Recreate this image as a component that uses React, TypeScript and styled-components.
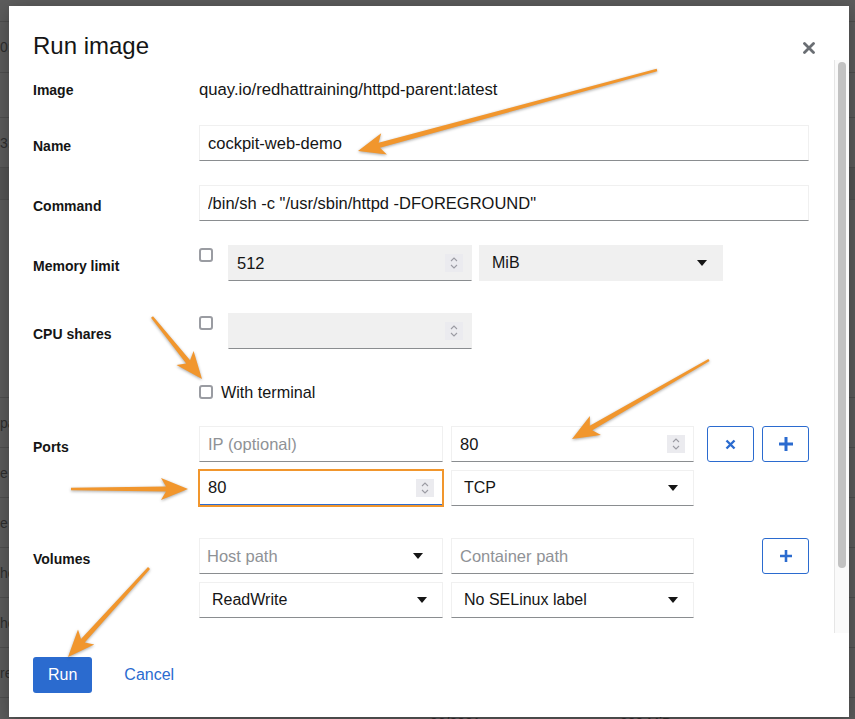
import React from 'react';
import styled, { createGlobalStyle, css } from 'styled-components';

const FONT = `"Liberation Sans", Arial, sans-serif`;
const BLUE = '#2b6bcf';
const ORANGE = '#f1962d';

const GlobalStyle = createGlobalStyle`
  html, body { margin: 0; padding: 0; }
  body { font-family: ${FONT}; color: #151515; background: #5c5c5c; }
  * { box-sizing: border-box; }
`;

const Page = styled.div`
  position: relative;
  width: 855px;
  height: 719px;
  overflow: hidden;
  background: #5c5c5c;
`;

/* ---------- background table behind the backdrop ---------- */
const BgTable = styled.div`
  display: flex;
  flex-direction: column;
`;

const BgRow = styled.div<{ $h: number; $dark?: boolean }>`
  flex: none;
  height: ${(p) => p.$h}px;
  display: grid;
  grid-template-columns: 430px 190px 1fr;
  align-items: center;
  border-bottom: 1px solid #4e4e4e;
  background: ${(p) => (p.$dark ? '#545454' : 'transparent')};
  font-size: 14px;
  color: #2e2e2e;
`;

const BgCell = styled.span`
  white-space: nowrap;
  overflow: hidden;
`;

/* ---------- modal ---------- */
const Modal = styled.div`
  position: absolute;
  left: 9px;
  top: 6px;
  width: 840px;
  height: 711px;
  background: #fff;
  display: flex;
  flex-direction: column;
  box-shadow: 0 4px 16px rgba(0, 0, 0, 0.3);
`;

const Header = styled.div`
  flex: none;
  height: 54px;
  padding: 26px 34px 0 24px;
  display: flex;
  justify-content: space-between;
  align-items: flex-start;
`;

const Title = styled.h1`
  margin: 0;
  font-family: ${FONT};
  font-size: 24px;
  font-weight: 400;
  line-height: 28px;
  color: #151515;
`;

const CloseButton = styled.button`
  margin-top: 10px;
  width: 12px;
  height: 12px;
  padding: 0;
  border: 0;
  background: none;
  display: flex;
  cursor: pointer;
`;

const Body = styled.div`
  flex: 1;
  min-height: 0;
  display: flex;
  overflow: hidden;
`;

const FormArea = styled.div`
  flex: 1;
  min-width: 0;
  padding: 18px 25px 0 24px;
  overflow: hidden;
`;

const ScrollTrack = styled.div`
  flex: none;
  width: 15px;
  padding: 2px 3px 0 3px;
  background: #fafafa;
  border-left: 1px solid #e6e6e6;
`;

const ScrollThumb = styled.div`
  height: 506px;
  border-radius: 4px;
  background: #c2c2c2;
`;

const FormRow = styled.div<{ $mt?: number }>`
  display: grid;
  grid-template-columns: 166px 1fr;
  margin-top: ${(p) => p.$mt ?? 0}px;
`;

const Label = styled.div<{ $pt?: number }>`
  font-size: 14px;
  font-weight: 700;
  line-height: 22px;
  padding-top: ${(p) => p.$pt ?? 10}px;
  color: #151515;
`;

const Value = styled.div`
  font-size: 16.7px;
  line-height: 24px;
  color: #151515;
`;

const Grid = styled.div`
  display: grid;
  grid-template-columns: 244px 243px 1fr;
  gap: 8px;
`;

const ButtonCell = styled.div`
  display: flex;
  justify-content: flex-end;
  gap: 8px;
`;

const InlineRow = styled.div<{ $gap: number }>`
  display: flex;
  align-items: flex-start;
  gap: ${(p) => p.$gap}px;
`;

type Variant = 'plain' | 'disabled' | 'focused';

const Field = styled.div<{ $variant?: Variant; $width?: number; $annotated?: boolean }>`
  height: 36px;
  ${(p) => (p.$width ? `width: ${p.$width}px; flex: none;` : '')}
  display: flex;
  align-items: center;
  padding: 0 8px;
  border: 1px solid #f0f0f0;
  border-bottom-color: #8a8d90;
  background: #fff;
  ${(p) =>
    p.$variant === 'disabled' &&
    css`
      background: #f0f0f0;
      border-color: #f0f0f0;
      border-bottom-color: #8a8d90;
    `}
  ${(p) =>
    p.$variant === 'focused' &&
    css`
      border-bottom: 2px solid ${BLUE};
    `}
  ${(p) =>
    p.$annotated &&
    css`
      outline: 2px solid ${ORANGE};
      outline-offset: -1px;
    `}
`;

const TextInput = styled.input`
  flex: 1;
  min-width: 0;
  border: 0;
  outline: 0;
  padding: 0;
  background: transparent;
  font-family: ${FONT};
  font-size: 16.5px;
  color: #151515;
  &::placeholder {
    color: #8f9296;
  }
`;

const SelectBox = styled.div<{ $disabled?: boolean; $typeahead?: boolean; $width?: number }>`
  height: 36px;
  ${(p) => (p.$width ? `width: ${p.$width}px; flex: none;` : '')}
  display: flex;
  align-items: center;
  justify-content: space-between;
  padding: ${(p) => (p.$typeahead ? '0 19px 0 7px' : '0 15px 0 12px')};
  border: 1px solid #f0f0f0;
  border-bottom-color: #8a8d90;
  background: #fff;
  font-size: ${(p) => (p.$typeahead ? '16.5px' : '16px')};
  ${(p) =>
    p.$disabled &&
    css`
      background: #f0f0f0;
      border-color: #f0f0f0;
    `}
`;

const SelectText = styled.span<{ $placeholder?: boolean }>`
  color: ${(p) => (p.$placeholder ? '#8f9296' : '#151515')};
`;

const SpinBox = styled.span`
  flex: none;
  width: 18px;
  height: 18px;
  background: #ebebef;
  display: flex;
  align-items: center;
  justify-content: center;
`;

const Checkbox = styled.input.attrs({ type: 'checkbox' })<{ $mt?: number; $mr?: number }>`
  appearance: none;
  flex: none;
  margin: ${(p) => p.$mt ?? 0}px ${(p) => p.$mr ?? 0}px 0 0;
  width: 14px;
  height: 14px;
  border: 2px solid #9a9ca2;
  border-radius: 3px;
  background: #fff;
`;

const CheckLabel = styled.label`
  display: flex;
  align-items: center;
  gap: 8px;
  height: 24px;
  font-size: 16.2px;
  color: #151515;
`;

const IconButton = styled.button`
  width: 47px;
  height: 36px;
  padding: 0;
  border: 1px solid ${BLUE};
  border-radius: 3px;
  background: #fff;
  display: flex;
  align-items: center;
  justify-content: center;
  cursor: pointer;
`;

const Footer = styled.div`
  flex: none;
  padding: 24px;
  display: flex;
  align-items: center;
  gap: 16px;
`;

const PrimaryButton = styled.button`
  height: 36px;
  padding: 0 15px;
  border: 0;
  border-radius: 3px;
  background: ${BLUE};
  color: #fff;
  font-family: ${FONT};
  font-size: 16px;
  cursor: pointer;
`;

const LinkButton = styled.button`
  padding: 0 0 0 16px;
  border: 0;
  background: none;
  color: ${BLUE};
  font-family: ${FONT};
  font-size: 16px;
  cursor: pointer;
`;

const Annotations = styled.svg`
  position: absolute;
  left: 0;
  top: 0;
  width: 855px;
  height: 719px;
  pointer-events: none;
  filter: drop-shadow(0 1px 1.5px rgba(0, 0, 0, 0.35));
`;

/* ---------- icons ---------- */
const Caret = () => (
  <svg width="10" height="6" viewBox="0 0 10 6">
    <polygon points="0,0 10,0 5,6" fill="#151515" />
  </svg>
);

const Spinner = () => (
  <SpinBox>
    <svg width="8" height="14" viewBox="0 0 8 14">
      <polyline points="1,5 4,2 7,5" fill="none" stroke="#9b9ba3" strokeWidth="1.1" />
      <polyline points="1,9 4,12 7,9" fill="none" stroke="#9b9ba3" strokeWidth="1.1" />
    </svg>
  </SpinBox>
);

const CloseIcon = () => (
  <svg width="12" height="12" viewBox="0 0 12 12">
    <path d="M1.5 1.5 L10.5 10.5 M10.5 1.5 L1.5 10.5" stroke="#6a6e73" strokeWidth="2.8" strokeLinecap="round" />
  </svg>
);

const TimesIcon = () => (
  <svg width="11" height="11" viewBox="0 0 11 11">
    <path d="M1.5 1.5 L9.5 9.5 M9.5 1.5 L1.5 9.5" stroke={BLUE} strokeWidth="2.4" />
  </svg>
);

const PlusIcon = ({ size }: { size: number }) => (
  <svg width={size} height={size} viewBox="0 0 14 14">
    <path d="M7 0 V14 M0 7 H14" stroke={BLUE} strokeWidth="3" />
  </svg>
);

function arrowPoints(x1: number, y1: number, x2: number, y2: number) {
  const w0 = 2.6;
  const w1 = 5;
  const L = 27;
  const H = 11;
  const notch = 5;
  const dx = x2 - x1;
  const dy = y2 - y1;
  const len = Math.hypot(dx, dy);
  const ux = dx / len;
  const uy = dy / len;
  const px = -uy;
  const py = ux;
  const pt = (a: number, b: number) => `${(x1 + ux * a + px * b).toFixed(1)},${(y1 + uy * a + py * b).toFixed(1)}`;
  return [
    pt(0, -w0 / 2),
    pt(len - L + notch, -w1 / 2),
    pt(len - L, -H),
    pt(len, 0),
    pt(len - L, H),
    pt(len - L + notch, w1 / 2),
    pt(0, w0 / 2),
  ].join(' ');
}

const arrows: [number, number, number, number][] = [
  [657, 70, 358, 151],
  [152, 317, 202, 379],
  [709, 360, 572, 439],
  [71, 489, 188, 489],
  [149, 568, 68, 657],
];

const bgRows: { h: number; a?: string; b?: string; c?: string; dark?: boolean }[] = [
  { h: 22 },
  { h: 51, a: '0:' },
  { h: 45 },
  { h: 50, a: '3.0' },
  { h: 32, dark: true },
  { h: 198 },
  { h: 50, a: 'pa' },
  { h: 50, a: 'e' },
  { h: 50, a: 'e' },
  { h: 50, a: 'he' },
  { h: 50, a: 'he' },
  { h: 50, a: 're' },
  { h: 50, b: '06/2021', c: '200 MiB' },
];

export default function App() {
  return (
    <Page>
      <GlobalStyle />
      <BgTable>
        {bgRows.map((r, i) => (
          <BgRow key={i} $h={r.h} $dark={r.dark}>
            <BgCell>{r.a ?? ''}</BgCell>
            <BgCell>{r.b ?? ''}</BgCell>
            <BgCell>{r.c ?? ''}</BgCell>
          </BgRow>
        ))}
      </BgTable>

      <Modal role="dialog" aria-label="Run image">
        <Header>
          <Title>Run image</Title>
          <CloseButton aria-label="Close">
            <CloseIcon />
          </CloseButton>
        </Header>

        <Body>
          <FormArea>
            <FormRow>
              <Label $pt={1}>Image</Label>
              <Value>quay.io/redhattraining/httpd-parent:latest</Value>
            </FormRow>

            <FormRow $mt={23}>
              <Label>Name</Label>
              <Field>
                <TextInput readOnly value="cockpit-web-demo" />
              </Field>
            </FormRow>

            <FormRow $mt={24}>
              <Label>Command</Label>
              <Field>
                <TextInput readOnly value={'/bin/sh -c "/usr/sbin/httpd -DFOREGROUND"'} />
              </Field>
            </FormRow>

            <FormRow $mt={24}>
              <Label>Memory limit</Label>
              <InlineRow $gap={7}>
                <Checkbox $mt={3} $mr={8} />
                <Field $variant="disabled" $width={244}>
                  <TextInput readOnly value="512" />
                  <Spinner />
                </Field>
                <SelectBox $disabled $width={244}>
                  <SelectText>MiB</SelectText>
                  <Caret />
                </SelectBox>
              </InlineRow>
            </FormRow>

            <FormRow $mt={32}>
              <Label>CPU shares</Label>
              <InlineRow $gap={7}>
                <Checkbox $mt={3} $mr={8} />
                <Field $variant="disabled" $width={244}>
                  <TextInput readOnly value="" />
                  <Spinner />
                </Field>
              </InlineRow>
            </FormRow>

            <FormRow $mt={31}>
              <div />
              <CheckLabel>
                <Checkbox />
                With terminal
              </CheckLabel>
            </FormRow>

            <FormRow $mt={22}>
              <Label>Ports</Label>
              <Grid>
                <Field>
                  <TextInput readOnly placeholder="IP (optional)" />
                </Field>
                <Field>
                  <TextInput readOnly value="80" />
                  <Spinner />
                </Field>
                <ButtonCell>
                  <IconButton aria-label="Remove">
                    <TimesIcon />
                  </IconButton>
                  <IconButton aria-label="Add">
                    <PlusIcon size={14} />
                  </IconButton>
                </ButtonCell>
                <Field $variant="focused" $annotated>
                  <TextInput readOnly value="80" />
                  <Spinner />
                </Field>
                <SelectBox>
                  <SelectText>TCP</SelectText>
                  <Caret />
                </SelectBox>
                <div />
              </Grid>
            </FormRow>

            <FormRow $mt={32}>
              <Label>Volumes</Label>
              <Grid>
                <SelectBox $typeahead>
                  <SelectText $placeholder>Host path</SelectText>
                  <Caret />
                </SelectBox>
                <Field>
                  <TextInput readOnly placeholder="Container path" />
                </Field>
                <ButtonCell>
                  <IconButton aria-label="Add">
                    <PlusIcon size={12} />
                  </IconButton>
                </ButtonCell>
                <SelectBox>
                  <SelectText>ReadWrite</SelectText>
                  <Caret />
                </SelectBox>
                <SelectBox>
                  <SelectText>No SELinux label</SelectText>
                  <Caret />
                </SelectBox>
                <div />
              </Grid>
            </FormRow>
          </FormArea>
          <ScrollTrack aria-hidden>
            <ScrollThumb />
          </ScrollTrack>
        </Body>

        <Footer>
          <PrimaryButton>Run</PrimaryButton>
          <LinkButton>Cancel</LinkButton>
        </Footer>
      </Modal>

      <Annotations viewBox="0 0 855 719">
        {arrows.map(([x1, y1, x2, y2], i) => (
          <polygon key={i} points={arrowPoints(x1, y1, x2, y2)} fill={ORANGE} />
        ))}
      </Annotations>
    </Page>
  );
}
